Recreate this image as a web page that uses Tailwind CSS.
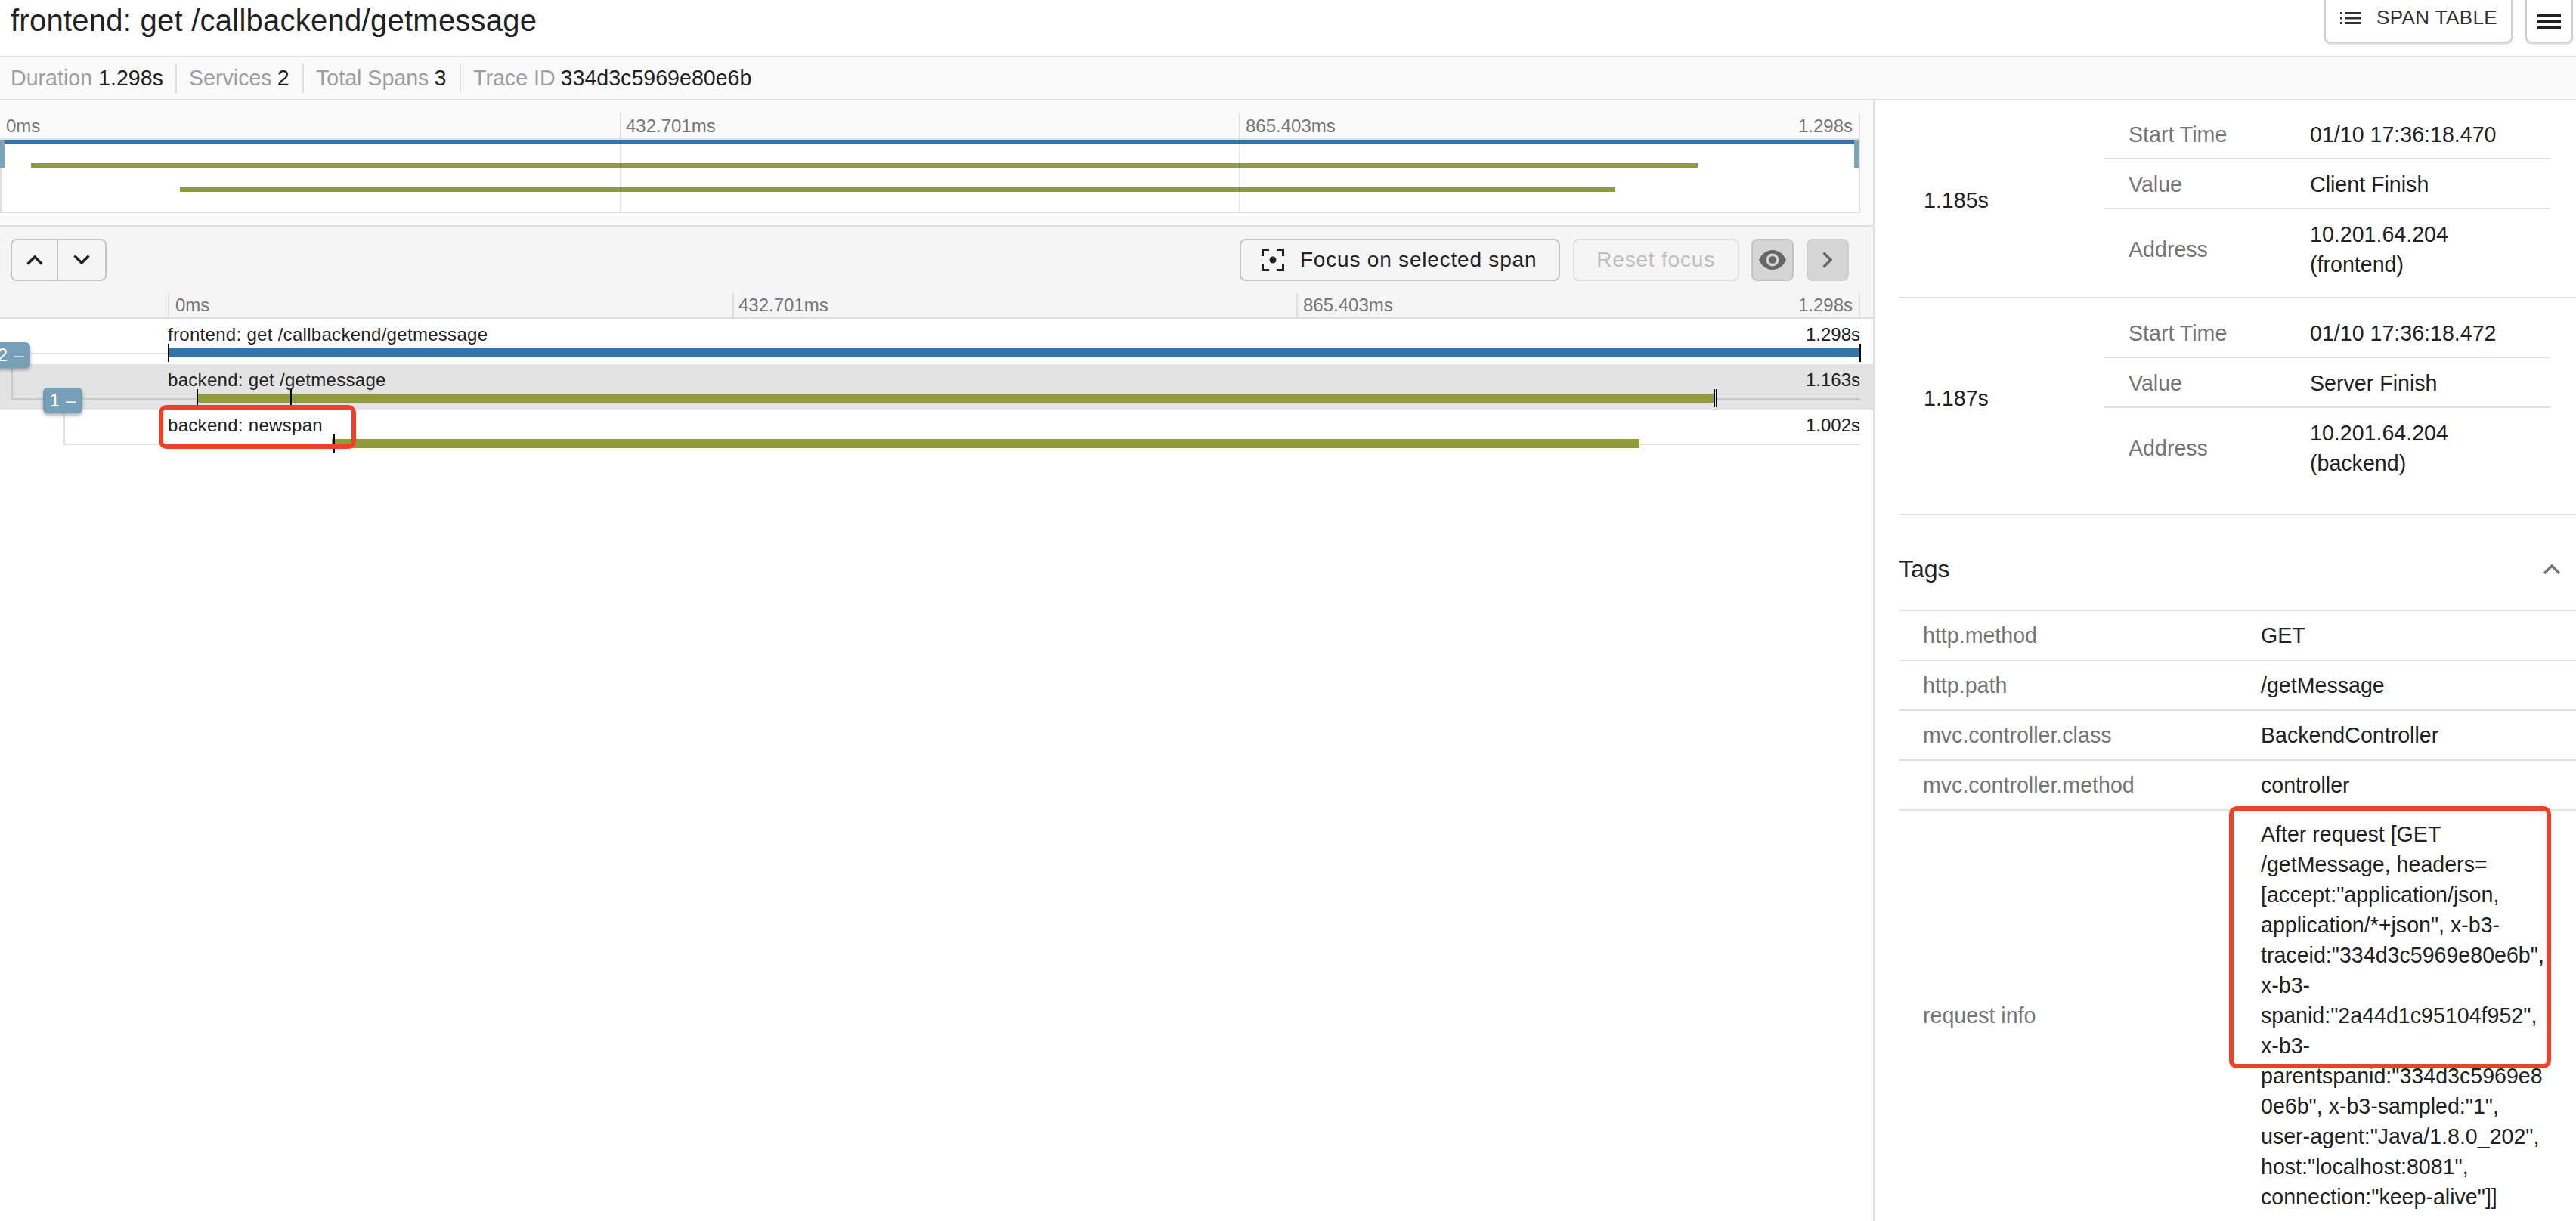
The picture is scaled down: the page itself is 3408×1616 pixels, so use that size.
<!DOCTYPE html>
<html lang="en">
<head>
    <meta charset="UTF-8">
    <title>frontend: get /callbackend/getmessage</title>
    <script src="https://cdn.jsdelivr.net/npm/@tailwindcss/browser@4"></script>
</head>
<body class="w-[3408px] h-[1616px] overflow-hidden bg-white text-[#212121] font-['Liberation_Sans',Arial,sans-serif]">
    <!-- header -->
    <header class="h-[76px] flex justify-between border-b-2 border-[#e0e0e0] overflow-hidden">
        <h1 class="pl-[14px] text-[40px] tracking-[0.25px] leading-[54px] font-normal">frontend: get /callbackend/getmessage</h1>
        <div class="flex items-start gap-[17px] pr-[4px] -mt-[20px]">
            <button class="w-[249px] h-[77px] flex items-center gap-[20px] pl-[19px] pt-[10px] border-2 border-[#cfcfcf] rounded-lg bg-white text-[26px] tracking-[0.4px] text-[#333] shadow-[0_2px_1px_rgba(0,0,0,0.12)]">
                <svg class="w-[28px] h-[16px]" viewBox="0 0 28 16" fill="#333"><rect x="0" y="0" width="3" height="3"/><rect x="0" y="6.5" width="3" height="3"/><rect x="0" y="13" width="3" height="3"/><rect x="6" y="0" width="22" height="3"/><rect x="6" y="6.5" width="22" height="3"/><rect x="6" y="13" width="22" height="3"/></svg>
                SPAN TABLE
            </button>
            <button class="w-[63px] h-[77px] flex items-center justify-center pt-[20px] border-2 border-[#cfcfcf] rounded-lg bg-white shadow-[0_2px_1px_rgba(0,0,0,0.12)]">
                <svg class="w-[31px] h-[20px]" viewBox="0 0 31 20" fill="#212121"><rect width="31" height="4"/><rect y="8" width="31" height="4"/><rect y="16" width="31" height="4"/></svg>
            </button>
        </div>
    </header>

    <!-- trace summary -->
    <div class="h-[57px] flex items-center pl-[14px] bg-[#fafafa] border-b-2 border-[#e0e0e0] text-[28.6px] leading-none text-[#9e9e9e]">
        <div class="w-[220px] h-[39px] flex items-center gap-[8px] border-r-2 border-[#e0e0e0]">Duration <span class="text-[#212121]">1.298s</span></div>
        <div class="w-[168px] h-[39px] flex items-center gap-[7px] pl-[16px] border-r-2 border-[#e0e0e0]">Services <span class="text-[#212121]">2</span></div>
        <div class="w-[208px] h-[39px] flex items-center gap-[7px] pl-[16px] border-r-2 border-[#e0e0e0]">Total Spans <span class="text-[#212121]">3</span></div>
        <div class="h-[39px] flex items-center gap-[7px] pl-[16px]">Trace ID <span class="text-[#212121]">334d3c5969e80e6b</span></div>
    </div>

    <div class="flex h-[1483px]">
        <!-- timeline column -->
        <main class="w-[2480px] border-r-2 border-[#e0e0e0]">
            <!-- minimap -->
            <section class="h-[167px] pt-[17px] bg-[#fafafa] border-b-2 border-[#e0e0e0]">
                <div class="relative w-[2461px] h-[33px] text-[24px] leading-[33px] text-[#757575]">
                    <span class="absolute left-[8px] top-0">0ms</span>
                    <span class="absolute left-[828px] top-0">432.701ms</span>
                    <span class="absolute left-[1648px] top-0">865.403ms</span>
                    <span class="absolute right-[10px] top-0">1.298s</span>
                    <i class="absolute left-[820px] top-0 bottom-0 w-[2px] bg-[#e0e0e0]"></i>
                    <i class="absolute left-[1639px] top-0 bottom-0 w-[2px] bg-[#e0e0e0]"></i>
                    <i class="absolute right-0 top-0 bottom-0 w-[2px] bg-[#e0e0e0]"></i>
                </div>
                <div class="relative w-[2461px] h-[99px] bg-white border-2 border-[#e0e0e0]">
                    <i class="absolute -left-[2px] right-0 top-0 h-[6px] bg-[#3574a6]"></i>
                    <i class="absolute left-[39px] w-[2205px] top-[31px] h-[6px] bg-[#919b3d]"></i>
                    <i class="absolute left-[236px] w-[1899px] top-[63px] h-[6px] bg-[#919b3d]"></i>
                    <i class="absolute left-[818px] top-0 bottom-0 w-[2px] bg-black/10"></i>
                    <i class="absolute left-[1637px] top-0 bottom-0 w-[2px] bg-black/10"></i>
                    <i class="absolute -left-[2px] top-0 w-[6px] h-[37px] bg-[#7ba4bb]"></i>
                    <i class="absolute right-0 top-0 w-[6px] h-[37px] bg-[#7ba4bb]"></i>
                </div>
            </section>

            <!-- controls -->
            <section class="h-[122px] bg-[#f5f5f5] border-b-2 border-[#e0e0e0]">
                <div class="h-[88px] flex items-start justify-between pt-[16px] pl-[14px] pr-[32px]">
                    <div class="flex h-[56px] border-2 border-[#c4c4c4] rounded-lg">
                        <button class="w-[61px] flex items-center justify-center border-r-2 border-[#c4c4c4]">
                            <svg class="w-[22px] h-[14px]" viewBox="0 0 22 14" fill="none" stroke="#212121" stroke-width="3.4"><path d="M1.5 12.5 11 3l9.5 9.5"/></svg>
                        </button>
                        <button class="w-[62px] flex items-center justify-center">
                            <svg class="w-[22px] h-[14px]" viewBox="0 0 22 14" fill="none" stroke="#212121" stroke-width="3.4"><path d="M1.5 1.5 11 11l9.5-9.5"/></svg>
                        </button>
                    </div>
                    <div class="flex gap-[16.7px]">
                        <button class="w-[424px] h-[56px] flex items-center gap-[21px] pl-[27px] border-2 border-[#c4c4c4] rounded-lg text-[28px] tracking-[0.8px]">
                            <svg class="w-[30px] h-[30px]" viewBox="0 0 30 30" fill="none" stroke="#212121" stroke-width="3"><path d="M10 1.500H1.500V10M20 1.500h8.500V10M1.500 20v8.500H10M28.500 20v8.500H20"/><circle cx="15" cy="15" r="4.500" fill="#212121" stroke="none"/></svg>
                            Focus on selected span
                        </button>
                        <button class="w-[220px] h-[56px] border-2 border-[#e0e0e0] rounded-lg text-[28px] tracking-[0.8px] text-[#bdbdbd]">Reset focus</button>
                        <button class="w-[56px] h-[56px] flex items-center justify-center bg-[#d5d5d5] border-2 border-[#c4c4c4] rounded-lg">
                            <svg class="w-[36px] h-[26px]" viewBox="0 0 36 26"><path fill="#666" fill-rule="evenodd" d="M18 0C10 0 3.500 5 0 13c3.500 8 10 13 18 13s14.500-5 18-13C32.500 5 26 0 18 0Zm0 21.500a8.500 8.500 0 1 1 0-17 8.500 8.500 0 0 1 0 17Z"/><circle cx="18" cy="13" r="5" fill="#666"/></svg>
                        </button>
                        <button class="w-[56px] h-[56px] flex items-center justify-center bg-[#d5d5d5] border-2 border-[#d0d0d0] rounded-lg">
                            <svg class="w-[14px] h-[22px]" viewBox="0 0 14 22" fill="none" stroke="#666" stroke-width="3.4"><path d="M1.500 1.500 11 11l-9.500 9.500"/></svg>
                        </button>
                    </div>
                </div>
                <div class="relative w-[2461px] h-[32px] text-[24px] leading-[32px] text-[#757575]">
                    <span class="absolute left-[232px] top-0">0ms</span>
                    <span class="absolute left-[977px] top-0">432.701ms</span>
                    <span class="absolute left-[1724px] top-0">865.403ms</span>
                    <span class="absolute right-[10px] top-0">1.298s</span>
                    <i class="absolute left-[222px] top-0 bottom-0 w-[2px] bg-[#e0e0e0]"></i>
                    <i class="absolute left-[969px] top-0 bottom-0 w-[2px] bg-[#e0e0e0]"></i>
                    <i class="absolute left-[1715px] top-0 bottom-0 w-[2px] bg-[#e0e0e0]"></i>
                    <i class="absolute right-0 top-0 bottom-0 w-[2px] bg-[#e0e0e0]"></i>
                </div>
            </section>

            <!-- span rows -->
            <section class="relative text-[24px]">
                <div class="relative h-[60px]">
                    <span class="absolute left-[222px] top-[6px] leading-[30px] tracking-[0.3px]">frontend: get /callbackend/getmessage</span>
                    <span class="absolute right-[17px] top-[6px] leading-[30px]">1.298s</span>
                    <i class="absolute left-[40px] w-[182px] top-[45px] h-[2px] bg-[#e0e0e0]"></i>
                    <i class="absolute left-[222px] w-[2239px] top-[39px] h-[12px] bg-[#3574a6]"></i>
                    <i class="absolute left-[222px] top-[33px] w-[2px] h-[24px] bg-black"></i>
                    <i class="absolute left-[2460px] top-[33px] w-[2px] h-[24px] bg-black"></i>
                </div>
                <div class="relative h-[60px] bg-[#e3e3e3]">
                    <span class="absolute left-[222px] top-[6px] leading-[30px] tracking-[0.3px]">backend: get /getmessage</span>
                    <span class="absolute right-[17px] top-[6px] leading-[30px]">1.163s</span>
                    <i class="absolute left-[15px] top-0 w-[2px] h-[46px] bg-[#c8c8c8]"></i>
                    <i class="absolute left-[15px] w-[2446px] top-[45px] h-[2px] bg-[#c8c8c8]"></i>
                    <i class="absolute left-[261px] w-[2008px] top-[39px] h-[12px] bg-[#919b3d]"></i>
                    <i class="absolute left-[260px] top-[33px] w-[2px] h-[24px] bg-black"></i>
                    <i class="absolute left-[384px] top-[33px] w-[2px] h-[24px] bg-black"></i>
                    <i class="absolute left-[2267px] top-[33px] w-[2px] h-[24px] bg-black"></i>
                    <i class="absolute left-[2270px] top-[33px] w-[2px] h-[24px] bg-black"></i>
                </div>
                <div class="relative h-[60px]">
                    <span class="absolute left-[222px] top-[6px] leading-[30px] tracking-[0.3px]">backend: newspan</span>
                    <span class="absolute right-[17px] top-[6px] leading-[30px]">1.002s</span>
                    <i class="absolute left-[84px] top-0 w-[2px] h-[46px] bg-[#e0e0e0]"></i>
                    <i class="absolute left-[84px] w-[2377px] top-[45px] h-[2px] bg-[#e0e0e0]"></i>
                    <i class="absolute left-[439px] w-[1730px] top-[39px] h-[12px] bg-[#919b3d]"></i>
                    <i class="absolute left-[441px] top-[33px] w-[2px] h-[24px] bg-black"></i>
                </div>
                <!-- tree badges -->
                <div class="absolute -left-[12px] top-[31px] w-[52px] h-[34px] flex items-center justify-center gap-[8px] rounded-md bg-[#75a0b8] text-white text-[24px] leading-none shadow-[0_3px_4px_rgba(0,0,0,0.3)]"><span>2</span><span>–</span></div>
                <div class="absolute left-[57px] top-[91px] w-[52px] h-[34px] flex items-center justify-center gap-[8px] rounded-md bg-[#75a0b8] text-white text-[24px] leading-none shadow-[0_3px_4px_rgba(0,0,0,0.3)]"><span>1</span><span>–</span></div>
                <!-- annotation -->
                <div class="absolute left-[210px] top-[114px] w-[261px] h-[58px] border-[6px] border-[#ee4127] rounded-[10px]"></div>
            </section>
        </main>

        <!-- detail column -->
        <aside class="relative w-[928px] overflow-hidden pt-[12px] text-[28.6px] leading-[40px]">
            <div class="flex ml-[32px] h-[250px] border-b-2 border-[#e0e0e0]">
                <div class="w-[272px] pl-[33px] pt-[100px]">1.185s</div>
                <div class="w-[590px]">
                    <div class="flex h-[66px] items-center pt-[2px] border-b-2 border-[#e0e0e0]"><span class="w-[272px] pl-[32px] text-[#757575]">Start Time</span><span>01/10 17:36:18.470</span></div>
                    <div class="flex h-[66px] items-center pt-[2px] border-b-2 border-[#e0e0e0]"><span class="w-[272px] pl-[32px] text-[#757575]">Value</span><span>Client Finish</span></div>
                    <div class="flex h-[106px] items-center"><span class="w-[272px] pl-[32px] text-[#757575]">Address</span><span>10.201.64.204<br>(frontend)</span></div>
                </div>
            </div>
            <div class="flex ml-[32px] h-[287px] pt-[13px] border-b-2 border-[#e0e0e0]">
                <div class="w-[272px] pl-[33px] pt-[99px]">1.187s</div>
                <div class="w-[590px]">
                    <div class="flex h-[66px] items-center pt-[2px] border-b-2 border-[#e0e0e0]"><span class="w-[272px] pl-[32px] text-[#757575]">Start Time</span><span>01/10 17:36:18.472</span></div>
                    <div class="flex h-[66px] items-center pt-[2px] border-b-2 border-[#e0e0e0]"><span class="w-[272px] pl-[32px] text-[#757575]">Value</span><span>Server Finish</span></div>
                    <div class="flex h-[106px] items-center"><span class="w-[272px] pl-[32px] text-[#757575]">Address</span><span>10.201.64.204<br>(backend)</span></div>
                </div>
            </div>
            <div class="flex items-center justify-between h-[125px] ml-[32px] pt-[16px] pr-[20px] text-[32px]">
                <span>Tags</span>
                <svg class="w-[24px] h-[14px]" viewBox="0 0 24 14" fill="none" stroke="#757575" stroke-width="3.4"><path d="M2 13 12 3l10 10"/></svg>
            </div>
            <div class="ml-[32px]">
                <div class="flex items-center h-[66px] border-t-2 border-[#e0e0e0]"><span class="w-[479px] pl-[32px] text-[#757575]">http.method</span><span>GET</span></div>
                <div class="flex items-center h-[66px] border-t-2 border-[#e0e0e0]"><span class="w-[479px] pl-[32px] text-[#757575]">http.path</span><span>/getMessage</span></div>
                <div class="flex items-center h-[66px] border-t-2 border-[#e0e0e0]"><span class="w-[479px] pl-[32px] text-[#757575]">mvc.controller.class</span><span>BackendController</span></div>
                <div class="flex items-center h-[66px] border-t-2 border-[#e0e0e0]"><span class="w-[479px] pl-[32px] text-[#757575]">mvc.controller.method</span><span>controller</span></div>
                <div class="flex items-center py-[11px] border-t-2 border-[#e0e0e0]"><span class="w-[479px] pl-[32px] text-[#757575]">request info</span><span>After request [GET<br>/getMessage, headers=<br>[accept:"application/json,<br>application/*+json", x-b3-<br>traceid:"334d3c5969e80e6b",<br>x-b3-<br>spanid:"2a44d1c95104f952",<br>x-b3-<br>parentspanid:"334d3c5969e8<br>0e6b", x-b3-sampled:"1",<br>user-agent:"Java/1.8.0_202",<br>host:"localhost:8081",<br>connection:"keep-alive"]]</span></div>
            </div>
            <!-- annotation -->
            <div class="absolute left-[469px] top-[934px] w-[426px] h-[347px] border-[6px] border-[#ee4127] rounded-[10px]"></div>
        </aside>
    </div>
</body>
</html>
